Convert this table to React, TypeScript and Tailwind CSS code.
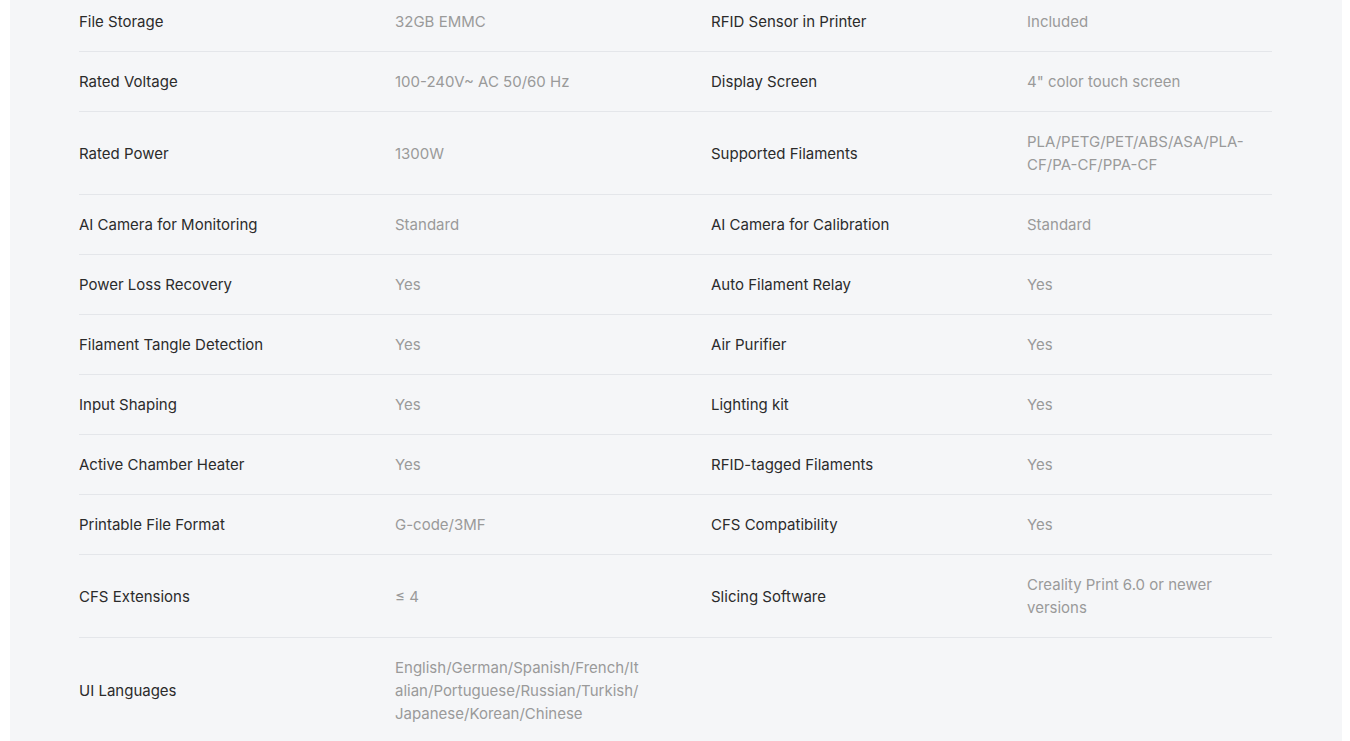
import React from "react";

type Row = { l1: string; v1: string; l2?: string; v2?: string };

const rows: Row[] = [
  { l1: "File Storage", v1: "32GB EMMC", l2: "RFID Sensor in Printer", v2: "Included" },
  { l1: "Rated Voltage", v1: "100-240V~ AC 50/60 Hz", l2: "Display Screen", v2: "4\" color touch screen" },
  { l1: "Rated Power", v1: "1300W", l2: "Supported Filaments", v2: "PLA/PETG/PET/ABS/ASA/PLA-CF/PA-CF/PPA-CF" },
  { l1: "AI Camera for Monitoring", v1: "Standard", l2: "AI Camera for Calibration", v2: "Standard" },
  { l1: "Power Loss Recovery", v1: "Yes", l2: "Auto Filament Relay", v2: "Yes" },
  { l1: "Filament Tangle Detection", v1: "Yes", l2: "Air Purifier", v2: "Yes" },
  { l1: "Input Shaping", v1: "Yes", l2: "Lighting kit", v2: "Yes" },
  { l1: "Active Chamber Heater", v1: "Yes", l2: "RFID-tagged Filaments", v2: "Yes" },
  { l1: "Printable File Format", v1: "G-code/3MF", l2: "CFS Compatibility", v2: "Yes" },
  { l1: "CFS Extensions", v1: "≤ 4", l2: "Slicing Software", v2: "Creality Print 6.0 or newer versions" },
  { l1: "UI Languages", v1: "English/German/Spanish/French/Italian/Portuguese/Russian/Turkish/Japanese/Korean/Chinese" },
];

export default function App() {
  return (
    <div className="min-h-[741px] bg-white pl-[10px] pr-[8px]" style={{ fontFamily: "Inter, 'Noto Sans', sans-serif" }}>
      <div className="bg-[#f5f6f8] min-h-[741px] overflow-hidden pl-[69px] pr-[70px]">
        <div className="-mt-[8px]">
          {rows.map((r, i) => (
            <div
              key={i}
              className={`flex items-center py-[18px] text-[15px] leading-[23px] ${i < rows.length - 1 ? "border-b border-[#e4e6ea]" : ""}`}
            >
              <div className="w-[316px] shrink-0 text-[#2b2b2b]">{r.l1}</div>
              <div className="w-[316px] shrink-0 pr-[72px] text-[#9a9a9a] break-all">{r.v1}</div>
              <div className="w-[316px] shrink-0 text-[#2b2b2b]">{r.l2}</div>
              <div className="flex-1 pr-[16px] text-[#9a9a9a]">{r.v2}</div>
            </div>
          ))}
        </div>
      </div>
    </div>
  );
}
